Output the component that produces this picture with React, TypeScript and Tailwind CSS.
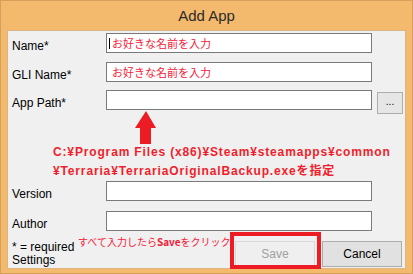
import React from "react"

const font = { fontFamily: '"Liberation Sans", "Noto Sans CJK JP", sans-serif' }

function Field({ label, value, caret }: { label: string; value?: string; caret?: boolean }) {
   return (
      <div className="flex items-center h-[20px]">
         <span className="w-[98px] pl-[4px] mt-[5px] text-[12px] text-black">{label}</span>
         <div className="relative w-[266px] h-[20px] bg-white border border-[#7a7a7a] flex items-center pl-[5px]">
            {caret && <span className="absolute left-[2px] top-[4px] w-[1px] h-[11px] bg-black" />}
            {value && (
               <span className="text-[11px] text-[#f5203a] leading-none" style={{ fontFamily: '"Noto Sans CJK JP", sans-serif' }}>
                  {value}
               </span>
            )}
         </div>
      </div>
   )
}

export default function App() {
   return (
      <main className="w-[413px] h-[274px] bg-[#f3b96c] border border-[#d7a05a] flex flex-col" style={font}>
         <header className="h-[29px] flex items-center justify-center text-[15px] text-[#2b2b2b] pt-[2px]">
            Add App
         </header>
         <section className="relative mx-[6px] h-[239px] bg-[#f0f0f0] border border-[#dcb682] flex flex-col pt-[2px]">
            <Field label="Name*" value="お好きな名前を入力" caret />
            <div className="h-[9px]" />
            <Field label="GLI Name*" value="お好きな名前を入力" />
            <div className="h-[8px]" />
            <div className="flex items-start">
               <Field label="App Path*" />
               <button className="ml-[5px] mt-[2px] w-[26px] h-[22px] bg-[#e6e6e6] border border-[#adadad] text-[10px] leading-none text-black pb-[3px]">
                  ...
               </button>
            </div>

            <div className="h-[67px]" />
            <Field label="Version" />
            <div className="h-[10px]" />
            <Field label="Author" />

            <div className="mt-[10px] flex items-start">
               <div className="w-[227px] pl-[4px] text-[12px] leading-[13px] text-black">
                  * = required<br />Settings
               </div>
               <button className="w-[80px] h-[26px] bg-[#efefef] border border-[#d9d9d9] text-[12px] text-[#a0a0a0]">
                  Save
               </button>
               <button className="ml-[7px] w-[80px] h-[26px] bg-[#e1e1e1] border border-[#adadad] text-[12px] text-black">
                  Cancel
               </button>
            </div>

            {/* annotations */}
            <svg className="absolute left-[127px] top-[80px]" width="22" height="33" viewBox="0 0 22 33">
               <polygon points="11,0 21,17 16,17 16,33 5,33 5,17 0,17" fill="#ed1c24" />
            </svg>
            <div className="absolute left-[45px] top-[112px] text-[12px] font-bold leading-[19px] tracking-[0.85px] text-[#f01e2c] whitespace-nowrap">
               C:¥Program Files (x86)¥Steam¥steamapps¥common<br />¥Terraria¥TerrariaOriginalBackup.exeを指定
            </div>
            <div className="absolute left-[70px] top-[203px] text-[10px] text-[#f5203a] whitespace-nowrap" style={{ fontFamily: '"Noto Sans CJK JP", sans-serif' }}>
               すべて入力したら<b>Save</b>をクリック
            </div>
            <div className="absolute left-[222px] top-[201px] w-[91px] h-[37px] border-[4px] border-[#ed1c24]" />
         </section>
      </main>
   )
}
